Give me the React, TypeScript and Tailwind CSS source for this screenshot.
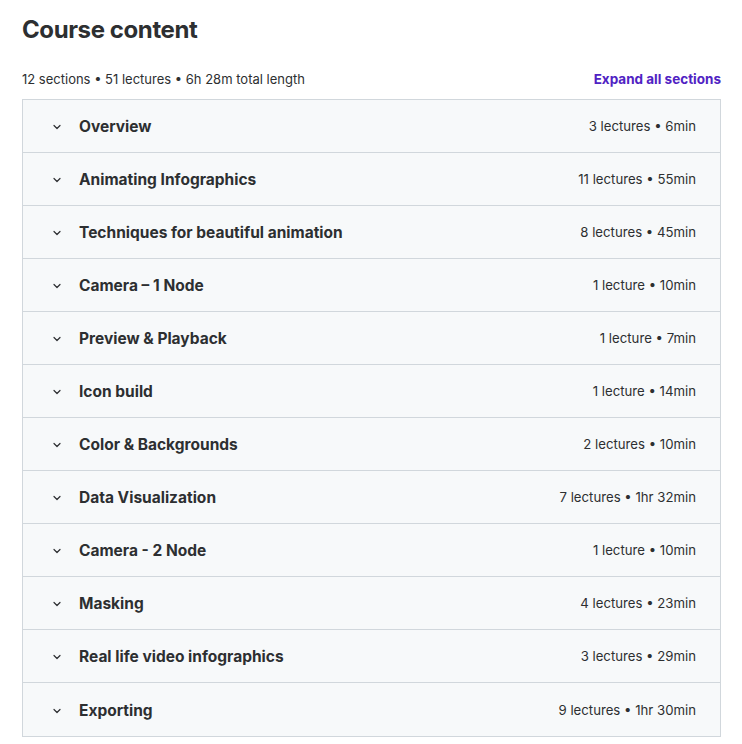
import React from "react";

const sections: [string, string][] = [
  ["Overview", "3 lectures • 6min"],
  ["Animating Infographics", "11 lectures • 55min"],
  ["Techniques for beautiful animation", "8 lectures • 45min"],
  ["Camera – 1 Node", "1 lecture • 10min"],
  ["Preview & Playback", "1 lecture • 7min"],
  ["Icon build", "1 lecture • 14min"],
  ["Color & Backgrounds", "2 lectures • 10min"],
  ["Data Visualization", "7 lectures • 1hr 32min"],
  ["Camera - 2 Node", "1 lecture • 10min"],
  ["Masking", "4 lectures • 23min"],
  ["Real life video infographics", "3 lectures • 29min"],
  ["Exporting", "9 lectures • 1hr 30min"],
];

function Chevron() {
  return (
    <svg width="12" height="12" viewBox="0 0 12 12" fill="none" className="shrink-0">
      <path d="M3 4.5 L6 7.5 L9 4.5" stroke="#2d2f31" strokeWidth="1.2" strokeLinecap="round" strokeLinejoin="round" />
    </svg>
  );
}

export default function App() {
  return (
    <div className="w-[742px] h-[744px] bg-white text-[#2d2f31] font-['Inter',sans-serif]">
      <div className="pl-[22px] pr-[21px] pt-[14px]">
        <h2 className="text-[24px] leading-[32px] font-bold tracking-[-0.4px]">Course content</h2>
        <div className="flex items-center justify-between mt-[24px] h-[20px]">
          <span className="text-[13px] text-[#2d2f31]">12 sections • 51 lectures • 6h 28m total length</span>
          <span className="text-[13.5px] font-bold text-[#5022c3] -mt-[2px]">Expand all sections</span>
        </div>
        <div className="mt-[9px] border border-[#d1d7dc]">
          {sections.map(([title, meta], i) => (
            <div
              key={i}
              className={`flex items-center justify-between h-[53px] bg-[#f7f9fa] pl-[28px] pr-[24px] pt-[2px] ${i < sections.length - 1 ? "border-b border-[#d1d7dc]" : "h-[52px]"}`}
            >
              <div className="flex items-center gap-[16px]">
                <Chevron />
                <span className="text-[15.5px] font-bold">{title}</span>
              </div>
              <span className="text-[13.2px]">{meta}</span>
            </div>
          ))}
        </div>
      </div>
    </div>
  );
}
